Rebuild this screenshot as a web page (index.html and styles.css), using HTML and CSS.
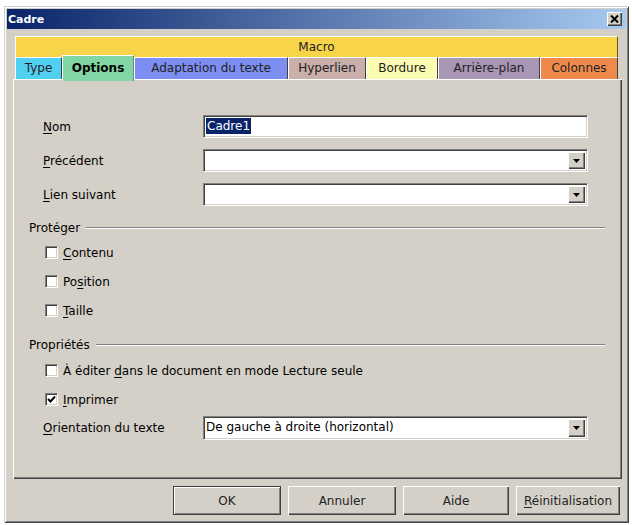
FILE: index.html
```html
<!DOCTYPE html>
<html lang="fr">
<head>
<meta charset="utf-8">
<title>Cadre</title>
<link rel="stylesheet" href="styles.css">
</head>
<body>
<div class="dialog">
  <div class="titlebar">
    <span class="title">Cadre</span>
    <span class="close"><svg width="9" height="8" viewBox="0 0 9 8"><path d="M1 0.5 L8 7.5 M8 0.5 L1 7.5" stroke="#000" stroke-width="2"/></svg></span>
  </div>
  <div class="tabs">
    <div class="macro">Macro</div>
    <div class="tabrow">
      <div class="tab t-type">Type</div>
      <div class="tab t-options">Options</div>
      <div class="tab t-adapt">Adaptation du texte</div>
      <div class="tab t-hyper">Hyperlien</div>
      <div class="tab t-bord">Bordure</div>
      <div class="tab t-arr">Arrière-plan</div>
      <div class="tab t-col">Colonnes</div>
    </div>
  </div>
  <div class="panel">
    <div class="form">
      <label class="lbl"><u>N</u>om</label>
      <div class="field"><span class="sel">Cadre1</span></div>
      <label class="lbl"><u>P</u>récédent</label>
      <div class="field combo"><span class="val"></span><span class="drop"><svg width="7" height="4" viewBox="0 0 7 4"><path d="M0 0 H7 L3.5 4 Z" fill="#000"/></svg></span></div>
      <label class="lbl"><u>L</u>ien suivant</label>
      <div class="field combo"><span class="val"></span><span class="drop"><svg width="7" height="4" viewBox="0 0 7 4"><path d="M0 0 H7 L3.5 4 Z" fill="#000"/></svg></span></div>
    </div>

    <div class="head head-first"><span>Protéger</span><i class="rule"></i></div>
    <div class="check"><span class="box"></span><span><u>C</u>ontenu</span></div>
    <div class="check"><span class="box"></span><span>Po<u>s</u>ition</span></div>
    <div class="check"><span class="box"></span><span><u>T</u>aille</span></div>

    <div class="head head-second"><span>Propriétés</span><i class="rule"></i></div>
    <div class="check"><span class="box"></span><span>À éditer <u>d</u>ans le document en mode Lecture seule</span></div>
    <div class="check"><span class="box"><svg width="9" height="9" viewBox="0 0 9 9"><path d="M1 4 L3.5 6.5 L8 1.5" stroke="#000" stroke-width="2" fill="none"/></svg></span><span><u>I</u>mprimer</span></div>

    <div class="form form-orient">
      <label class="lbl"><u>O</u>rientation du texte</label>
      <div class="field combo"><span class="val">De gauche à droite (horizontal)</span><span class="drop"><svg width="7" height="4" viewBox="0 0 7 4"><path d="M0 0 H7 L3.5 4 Z" fill="#000"/></svg></span></div>
    </div>
  </div>
  <div class="buttons">
    <button class="btn btn-ok">OK</button>
    <button class="btn btn-cancel">Annuler</button>
    <button class="btn btn-help">Aide</button>
    <button class="btn btn-reset"><u>R</u>éinitialisation</button>
  </div>
</div>
</body>
</html>
```

FILE: styles.css
```css
* { box-sizing: border-box; }

body {
  margin: 0;
  background: #ffffff;
  font-family: "DejaVu Sans", "Bitstream Vera Sans", sans-serif;
  font-size: 12px;
  color: #000;
}

u { text-decoration: underline; text-underline-offset: 2px; }

.dialog {
  margin: 6px 0 0 4px;
  width: 625px;
  height: 517px;
  background: #d4d0c8;
  padding: 3px;
  display: flex;
  flex-direction: column;
  box-shadow: inset 1px 1px 0 #d4d0c8, inset -1px -1px 0 #404040,
              inset 2px 2px 0 #ffffff, inset -2px -2px 0 #808080;
}

.titlebar {
  height: 20px;
  flex: none;
  background: linear-gradient(to right, #0a246a, #a6caf0);
  display: flex;
  align-items: center;
  justify-content: space-between;
  padding: 0 4px 0 1px;
}

.title {
  color: #fff;
  font-weight: bold;
  font-size: 11px;
}

.close {
  width: 15px;
  height: 14px;
  background: #d4d0c8;
  display: flex;
  align-items: center;
  justify-content: center;
  box-shadow: inset 1px 1px 0 #fff, inset -1px -1px 0 #404040, inset -2px -2px 0 #808080;
}

.tabs {
  margin: 7px 8px 0 8px;
  flex: none;
}

.macro {
  height: 21px;
  background: #f8d448;
  border-top: 1px solid #fff;
  border-left: 1px solid #fff;
  border-right: 1px solid #6a5a20;
  text-align: center;
  line-height: 20px;
  color: #222;
}

.tabrow {
  display: flex;
  height: 22px;
}

.tab {
  height: 22px;
  border-top: 1px solid #fff;
  border-left: 1px solid #fff;
  border-right: 1px solid #404040;
  text-align: center;
  line-height: 21px;
  color: #222;
  white-space: nowrap;
}

.t-type { width: 47px; background: #52d0f2; }
.t-options {
  width: 72px;
  background: #80d6a4;
  font-weight: bold;
  color: #000;
  height: 26px;
  margin-top: -2px;
  margin-bottom: -4px;
  border-right-color: #808080;
  position: relative;
  z-index: 1;
  line-height: 24px;
}
.t-adapt { width: 154px; background: #7c8ef2; }
.t-hyper { width: 78px; background: #c9aeaa; }
.t-bord { width: 72px; background: #fcfbb2; }
.t-arr { width: 102px; background: #a996b4; }
.t-col { width: 78px; background: #f08a4c; }

.panel {
  flex: none;
  height: 400px;
  margin: 0 4px 0 6px;
  padding: 36px 17px 0 16px;
  box-shadow: inset 1px 1px 0 #fff, inset -1px -1px 0 #404040, inset -2px -2px 0 #808080;
  display: flex;
  flex-direction: column;
}

.form {
  display: grid;
  grid-template-columns: 160px 385px;
  row-gap: 11px;
  padding-left: 14px;
  align-items: center;
}

.lbl { white-space: nowrap; }

.field {
  height: 23px;
  background: #fff;
  border: 1px solid;
  border-color: #808080 #fff #fff #808080;
  box-shadow: inset 1px 1px 0 #404040, inset -1px -1px 0 #d4d0c8;
  padding: 2px 2px 0 2px;
  display: flex;
  align-items: flex-start;
  white-space: nowrap;
}

.sel {
  background: #0a246a;
  color: #fff;
  padding: 0 1px;
  line-height: 16px;
}

.combo { padding: 2px 2px 2px 2px; align-items: stretch; }
.combo .val { flex: 1; line-height: 17px; }

.drop {
  width: 17px;
  flex: none;
  background: #d4d0c8;
  display: flex;
  align-items: center;
  justify-content: center;
  box-shadow: inset 1px 1px 0 #fff, inset -1px -1px 0 #404040, inset -2px -2px 0 #808080;
}

.head {
  display: flex;
  align-items: center;
  height: 14px;
  line-height: 14px;
  white-space: nowrap;
}

.head-first { margin-top: 15px; margin-bottom: 3px; }
.head-second { margin-top: 13px; margin-bottom: 4px; }

.rule {
  flex: 1;
  height: 2px;
  margin-left: 6px;
  border-top: 1px solid #808080;
  border-bottom: 1px solid #fff;
}

.check {
  height: 29px;
  display: flex;
  align-items: center;
  padding-left: 16px;
  white-space: nowrap;
}

.box {
  width: 13px;
  height: 13px;
  flex: none;
  margin-right: 5px;
  background: #fff;
  border: 1px solid;
  border-color: #808080 #fff #fff #808080;
  box-shadow: inset 1px 1px 0 #404040, inset -1px -1px 0 #d4d0c8;
  display: flex;
  align-items: center;
  justify-content: center;
}

.form-orient { margin-top: 2px; }
.form-orient .field { height: 24px; }

.buttons {
  flex: none;
  display: flex;
  justify-content: flex-end;
  gap: 7px;
  margin-top: 7px;
  padding-right: 6px;
}

.btn {
  height: 29px;
  font-family: "DejaVu Sans", sans-serif;
  font-size: 12px;
  color: #222;
  background: #d4d0c8;
  border: none;
  box-shadow: inset 1px 1px 0 #fff, inset -1px -1px 0 #404040, inset -2px -2px 0 #808080;
  padding: 0;
}

.btn-ok {
  width: 108px;
  box-shadow: inset 0 0 0 1px #404040, inset 2px 2px 0 #fff, inset -2px -2px 0 #808080;
}
.btn-cancel { width: 108px; }
.btn-help { width: 106px; }
.btn-reset { width: 104px; }
```
